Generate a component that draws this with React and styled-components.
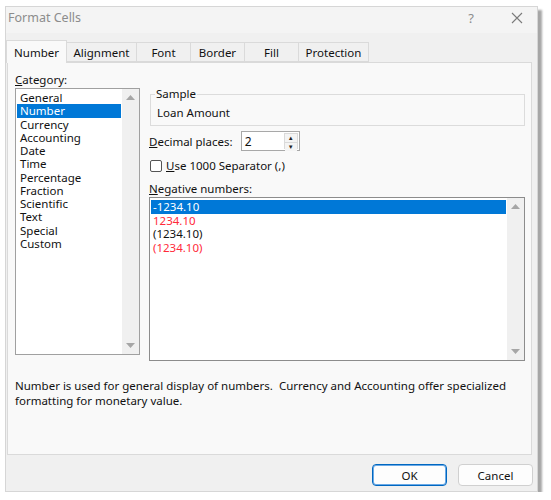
import styled, { createGlobalStyle } from 'styled-components'

const GlobalStyle = createGlobalStyle`
    body {
        margin: 0;
        background: #ffffff;
        font-family: "Noto Sans", "Open Sans", sans-serif;
        font-size: 11.5px;
        color: #111111;
    }
`

const categories = ['General', 'Number', 'Currency', 'Accounting', 'Date', 'Time', 'Percentage', 'Fraction', 'Scientific', 'Text', 'Special', 'Custom']
const negatives = [
    { label: '-1234.10', red: false },
    { label: '1234.10', red: true },
    { label: '(1234.10)', red: false },
    { label: '(1234.10)', red: true },
]
const tabs = [
    { label: 'Number', width: 61 },
    { label: 'Alignment', width: 71 },
    { label: 'Font', width: 55 },
    { label: 'Border', width: 55 },
    { label: 'Fill', width: 55 },
    { label: 'Protection', width: 71 },
]

// little grey scroll arrow
const Tri = ({ up }) => (
    <svg width="9" height="5" viewBox="0 0 9 5">
        <path d={up ? 'M0 5 L4.5 0 L9 5 Z' : 'M0 0 L4.5 5 L9 0 Z'} fill="#a6a6a6" />
    </svg>
)

const App = () => {
    return (
        <Page>
            <GlobalStyle />
            <Dialog>
                <TitleBar>
                    <Title>Format Cells</Title>
                    <TitleButtons>
                        <Help>?</Help>
                        <svg width="12" height="12" viewBox="0 0 12 12">
                            <path d="M1 1 L11 11 M11 1 L1 11" stroke="#7a7a7a" strokeWidth="1.1" fill="none" />
                        </svg>
                    </TitleButtons>
                </TitleBar>
                <TabStrip>
                    {tabs.map((t, i) => (
                        <Tab key={t.label} $active={i === 0} $width={t.width}>{t.label}</Tab>
                    ))}
                </TabStrip>
                <Panel>
                    <Columns>
                        <LeftColumn>
                            <FieldLabel><u>C</u>ategory:</FieldLabel>
                            <CategoryList>
                                <Items>
                                    {categories.map((c, i) => (
                                        <Item key={c} $selected={i === 1}>{c}</Item>
                                    ))}
                                </Items>
                                <ScrollBar>
                                    <Tri up />
                                    <Tri />
                                </ScrollBar>
                            </CategoryList>
                        </LeftColumn>
                        <RightColumn>
                            <SampleGroup>
                                <Legend>Sample</Legend>
                                <SampleText>Loan Amount</SampleText>
                            </SampleGroup>
                            <DecimalRow>
                                <span><u>D</u>ecimal places:</span>
                                <SpinBox>
                                    <SpinValue>2</SpinValue>
                                    <SpinButtons>
                                        <SpinButton>▲</SpinButton>
                                        <SpinButton>▼</SpinButton>
                                    </SpinButtons>
                                </SpinBox>
                            </DecimalRow>
                            <CheckRow>
                                <CheckBox />
                                <span><u>U</u>se 1000 Separator (,)</span>
                            </CheckRow>
                            <NegLabel><u>N</u>egative numbers:</NegLabel>
                            <NegativeList>
                                <Items>
                                    {negatives.map((n, i) => (
                                        <NegItem key={i} $selected={i === 0} $red={n.red}>{n.label}</NegItem>
                                    ))}
                                </Items>
                                <ScrollBar>
                                    <Tri up />
                                    <Tri />
                                </ScrollBar>
                            </NegativeList>
                        </RightColumn>
                    </Columns>
                    <Description>
                        Number is used for general display of numbers.&nbsp; Currency and Accounting offer specialized formatting for monetary value.
                    </Description>
                </Panel>
                <Footer>
                    <Button $primary>OK</Button>
                    <Button>Cancel</Button>
                </Footer>
            </Dialog>
        </Page>
    )
}

const Page = styled.div`
    padding: 6px 0 0 5px;
`

const Dialog = styled.div`
    width: 531px;
    height: 484px;
    background: #f0f0f0;
    border: 1px solid #d6d6d6;
    box-shadow: 4px 4px 2px rgba(0, 0, 0, 0.35);
    display: flex;
    flex-direction: column;
`

const TitleBar = styled.div`
    height: 26px;
    box-sizing: border-box;
    background: #f4f4f4;
    display: flex;
    align-items: center;
    justify-content: space-between;
    padding: 0 14px 5px 2px;
`

const Title = styled.div`
    font-size: 12.5px;
    color: #8c8c8c;
`

const TitleButtons = styled.div`
    display: flex;
    align-items: center;
    gap: 37px;
`

const Help = styled.span`
    font-size: 13px;
    color: #8c8c8c;
`

const TabStrip = styled.div`
    display: flex;
    align-items: flex-end;
    height: 29px;
`

const Tab = styled.div`
    width: ${p => p.$width}px;
    height: ${p => (p.$active ? 23 : 20)}px;
    margin-bottom: ${p => (p.$active ? -1 : 0)}px;
    margin-right: -1px;
    box-sizing: border-box;
    display: flex;
    align-items: center;
    justify-content: center;
    background: ${p => (p.$active ? '#f9f9f9' : '#f0f0f0')};
    border: 1px solid #dadada;
    border-bottom: ${p => (p.$active ? 'none' : '1px solid #dadada')};
    position: relative;
    z-index: ${p => (p.$active ? 1 : 0)};
    font-size: 11.5px;
`

const Panel = styled.div`
    margin: 0 5px 0 1px;
    height: 393px;
    box-sizing: border-box;
    background: #f9f9f9;
    border: 1px solid #dadada;
    padding: 9px 6px 0 7px;
    display: flex;
    flex-direction: column;
`

const Columns = styled.div`
    display: flex;
    gap: 9px;
`

const LeftColumn = styled.div`
    width: 125px;
    display: flex;
    flex-direction: column;
`

const FieldLabel = styled.div`
    height: 16px;
    line-height: 16px;
`

const listBox = `
    background: #ffffff;
    border: 1px solid #a0a0a0;
    box-sizing: border-box;
    display: flex;
`

const CategoryList = styled.div`
    ${listBox}
    height: 267px;
`

const Items = styled.div`
    flex: 1;
    padding: 2px 1px 0 1px;
`

const Item = styled.div`
    height: 13.25px;
    line-height: 13.25px;
    padding-left: 3px;
    background: ${p => (p.$selected ? '#0078d7' : 'transparent')};
    color: ${p => (p.$selected ? '#ffffff' : '#111111')};
`

const ScrollBar = styled.div`
    width: 17px;
    background: #f0f0f0;
    display: flex;
    flex-direction: column;
    justify-content: space-between;
    align-items: center;
    padding: 6px 0;
`

const RightColumn = styled.div`
    flex: 1;
    display: flex;
    flex-direction: column;
    padding-top: 16px;
`

const SampleGroup = styled.fieldset`
    margin: 0 0 0 1px;
    padding: 2px 8px 6px 6px;
    border: 1px solid #dcdcdc;
    height: 38px;
    box-sizing: border-box;
`

const Legend = styled.legend`
    padding: 0 1px;
    margin-left: -2px;
    line-height: 12px;
`

const SampleText = styled.div`
    line-height: 16px;
    margin-top: 3px;
`

const DecimalRow = styled.div`
    display: flex;
    align-items: center;
    gap: 8px;
    margin-top: 5px;
`

const SpinBox = styled.div`
    width: 59px;
    height: 20px;
    box-sizing: border-box;
    border: 1px solid #a8a8a8;
    background: #ffffff;
    display: flex;
    align-items: center;
    justify-content: space-between;
    padding: 0 1px 0 3px;
`

const SpinValue = styled.span`
    font-size: 12px;
`

const SpinButtons = styled.div`
    width: 14px;
    height: 16px;
    display: flex;
    flex-direction: column;
    border: 1px solid #dadada;
    box-sizing: border-box;
`

const SpinButton = styled.div`
    flex: 1;
    display: flex;
    align-items: center;
    justify-content: center;
    font-size: 6px;
    color: #222;
    background: #f4f4f4;
    & + & {
        border-top: 1px solid #dadada;
    }
`

const CheckRow = styled.div`
    display: flex;
    align-items: center;
    gap: 4px;
    margin-top: 7px;
    padding-left: 1px;
`

const CheckBox = styled.span`
    width: 12px;
    height: 12px;
    box-sizing: border-box;
    border: 1px solid #555;
    border-radius: 2px;
    background: #ffffff;
`

const NegLabel = styled.div`
    margin-top: 9px;
    line-height: 14px;
`

const NegativeList = styled.div`
    ${listBox}
    margin-top: 1px;
    height: 164px;
    border-color: #8c8c8c;
`

const NegItem = styled.div`
    height: 13.6px;
    line-height: 13.6px;
    padding-left: 2px;
    background: ${p => (p.$selected ? '#0078d7' : 'transparent')};
    color: ${p => (p.$selected ? '#ffffff' : p.$red ? '#ff2a3a' : '#111111')};
`

const Description = styled.div`
    margin-top: 17px;
    line-height: 15px;
    width: 500px;
`

const Footer = styled.div`
    flex: 1;
    display: flex;
    justify-content: flex-end;
    align-items: center;
    gap: 11px;
    padding: 4px 4px 0 0;
`

const Button = styled.button`
    width: 75px;
    height: 22px;
    box-sizing: border-box;
    border-radius: 4px;
    background: #fdfdfd;
    border: 1px solid ${p => (p.$primary ? '#0067c0' : '#d0d0d0')};
    box-shadow: ${p => (p.$primary ? 'inset 0 0 0 1px #6aa9e6' : 'none')};
    font-family: "Noto Sans", "Open Sans", sans-serif;
    font-size: 11.5px;
    color: #111111;
    padding: 0;
`

export default App;
